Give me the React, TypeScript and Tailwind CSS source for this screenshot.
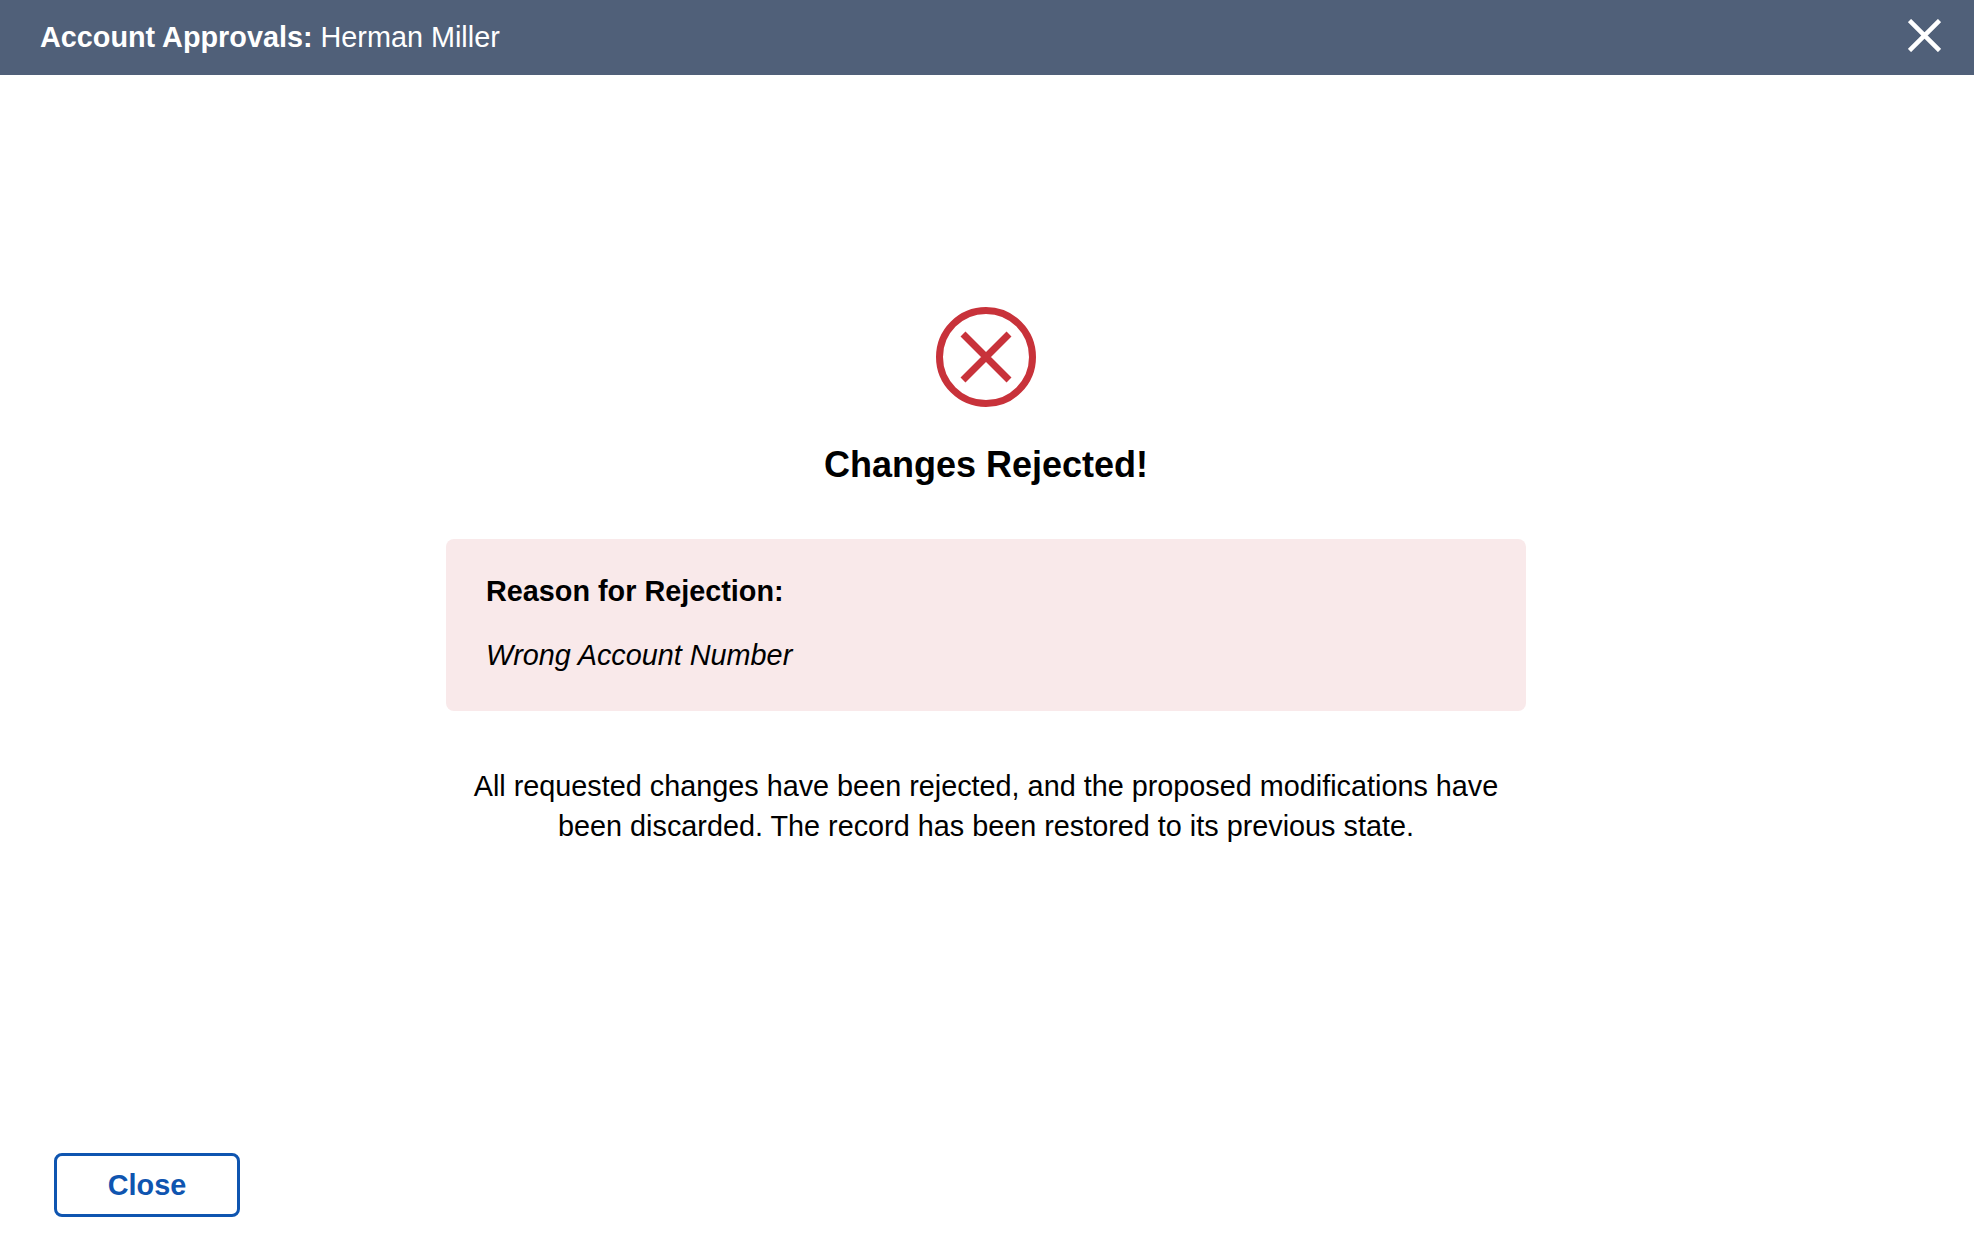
export default function App() {
  return (
    <div className="flex h-[1258px] w-full flex-col bg-white font-['Liberation_Sans',Arial,sans-serif] text-black">
      <header className="flex h-[75px] shrink-0 items-center justify-between bg-[#506079] pl-[40px] pr-[33px] text-[28.8px] leading-none text-white">
        <div>
          <span className="font-bold">Account Approvals:</span> Herman Miller
        </div>
        <svg className="mb-[4px]" width="33" height="33" viewBox="0 0 33 33" fill="none" stroke="white" strokeWidth="4.5" aria-label="Close">
          <path d="M1.5 1.5 31.5 31.5M31.5 1.5 1.5 31.5" />
        </svg>
      </header>
      <main className="flex flex-1 flex-col items-center pr-[2px] pt-[232px]">
        <svg width="100" height="100" viewBox="0 0 100 100" fill="none" stroke="#c8323a" strokeWidth="7">
          <circle cx="50" cy="50" r="46.5" />
          <path d="M27 27 73 73M73 27 27 73" />
        </svg>
        <h1 className="mt-[36px] text-[36px] font-bold leading-[44px]">Changes Rejected!</h1>
        <div className="mt-[52px] flex h-[172px] w-[1080px] flex-col rounded-lg bg-[#f9e9ea] px-[40px] pt-[34px]">
          <div className="text-[28.8px] font-bold leading-[36px]">Reason for Rejection:</div>
          <div className="mt-[28px] text-[28.8px] italic leading-[36px]">Wrong Account Number</div>
        </div>
        <p className="mt-[55px] w-[1040px] text-center text-[28.8px] leading-[40px]">
          All requested changes have been rejected, and the proposed modifications have been discarded. The record has been restored to its previous state.
        </p>
      </main>
      <footer className="shrink-0 pb-[41px] pl-[54px]">
        <button className="flex h-[64px] w-[186px] items-center justify-center rounded-lg border-[3px] border-[#0f55b0] bg-white pt-[2px] text-[28.8px] font-bold text-[#0f55b0]">
          Close
        </button>
      </footer>
    </div>
  );
}
